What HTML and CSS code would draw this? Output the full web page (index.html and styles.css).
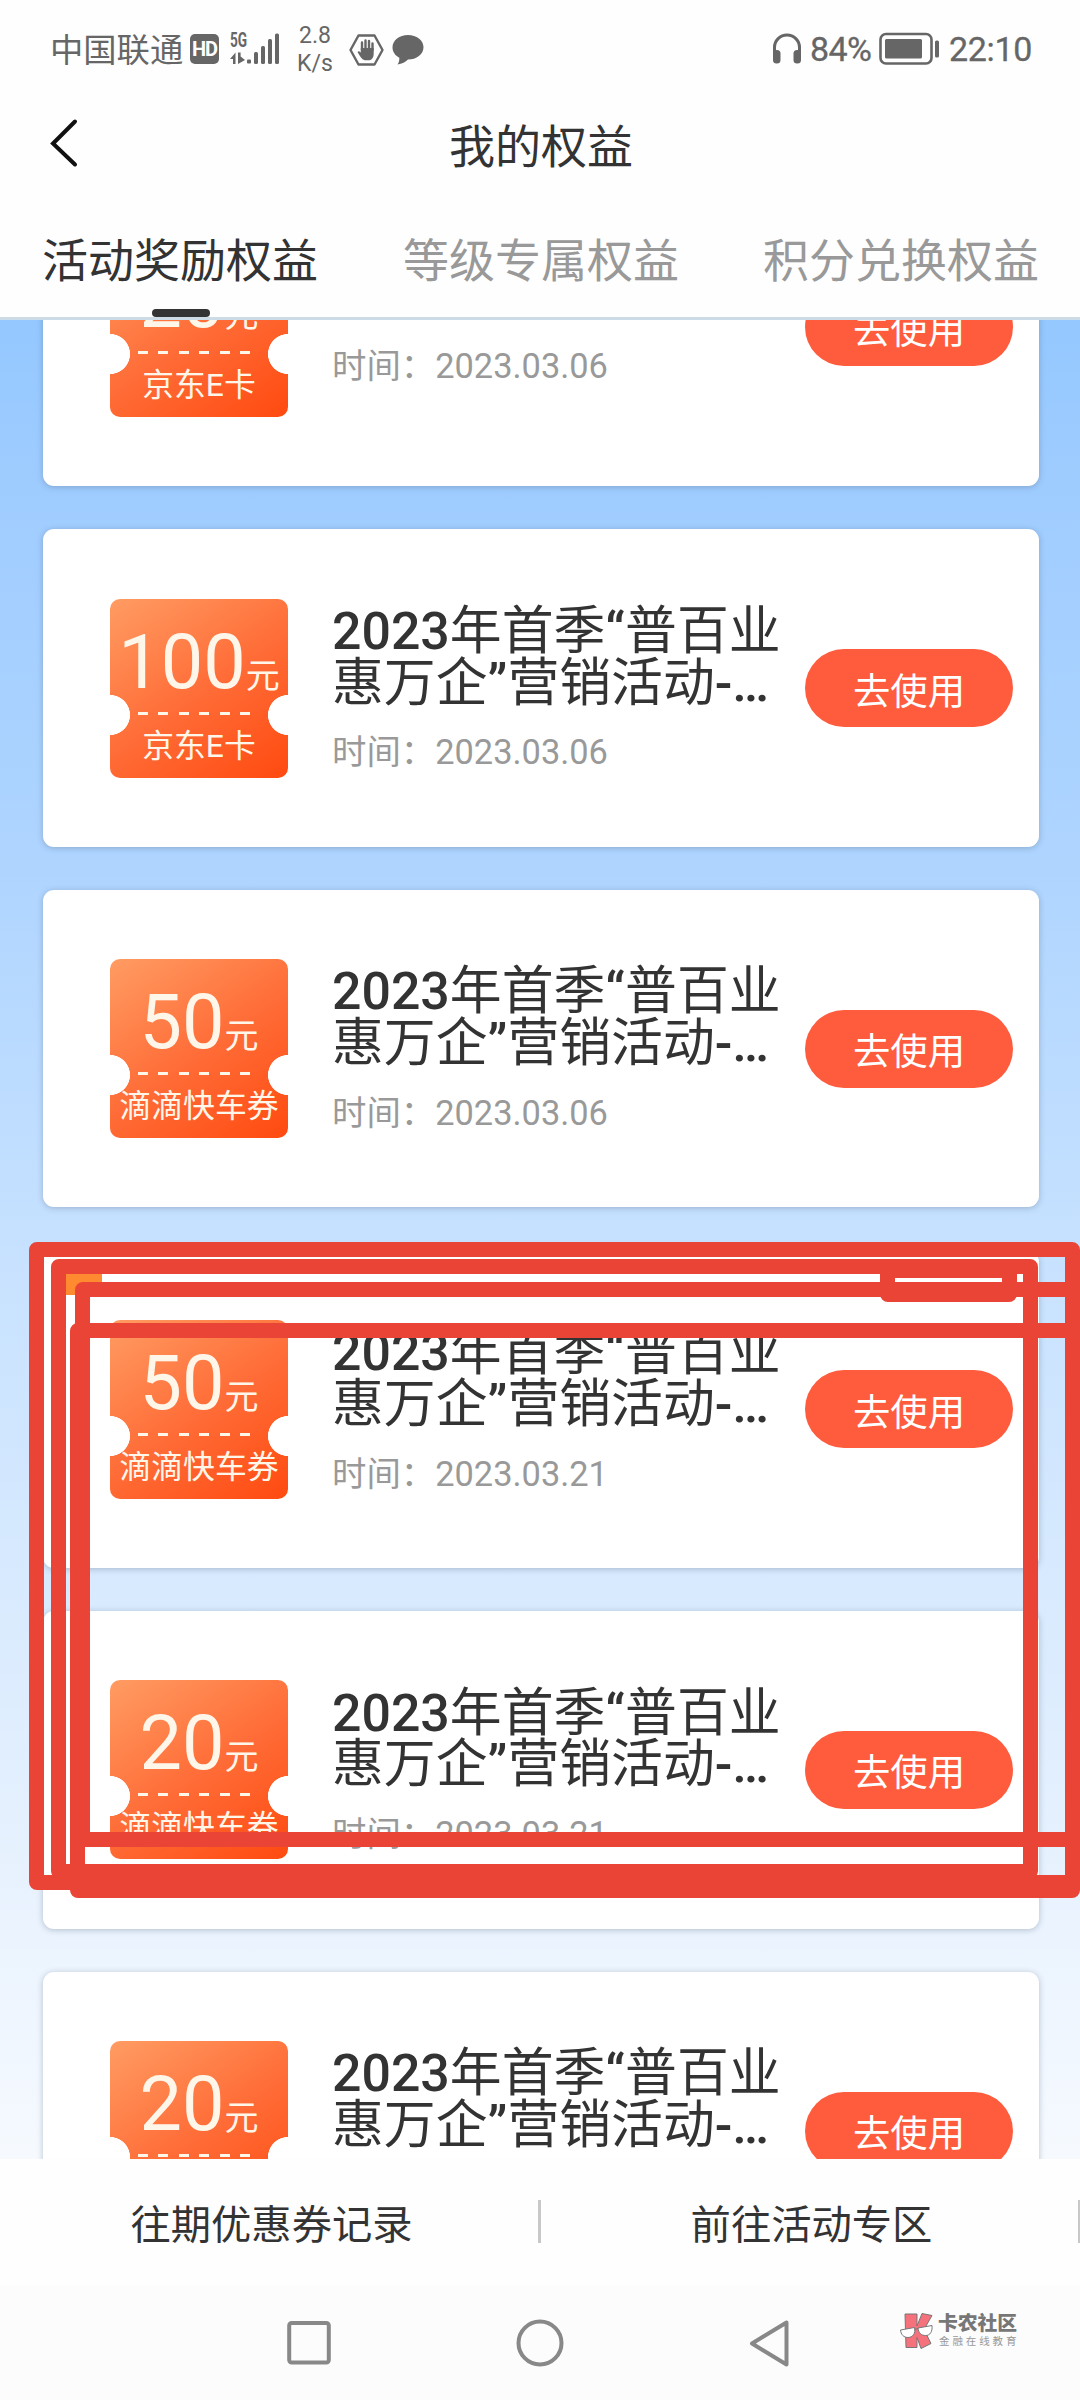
FILE: index.html
```html
<!DOCTYPE html>
<html lang="zh-CN">
<head>
<meta charset="utf-8">
<title>我的权益</title>
<link rel="stylesheet" href="styles.css">
</head>
<body>
<div class="screen">
  <header class="header">
    <div class="status">
      <div class="status-left">
        <span class="carrier">中国联通</span>
        <span class="hd">HD</span>
        <div class="net">
          <span class="net-type">5G</span>
          <svg class="signal" width="50" height="32" viewBox="0 0 50 32" fill="#666">
            <path d="M0 26l5.500-6.500V31H3v-5zM8 19.500h2.600v4l4.400 3.500-7 4z"/>
            <rect x="17" y="26.500" width="4" height="4" rx="1"/><rect x="24" y="19" width="4" height="12" rx="1.500"/><rect x="31" y="13" width="4" height="18" rx="1.500"/><rect x="38" y="6" width="4" height="25" rx="1.500"/><rect x="45" y="0.500" width="4" height="30.500" rx="1.500"/>
          </svg>
        </div>
        <div class="speed"><span>2.8</span><span>K/s</span></div>
        <svg class="guard" width="35" height="32" viewBox="0 0 35 32">
          <path d="M9.500 1.500h16l8 14.500-8 14.500h-16L1.500 16z" fill="none" stroke="#666" stroke-width="2.400" stroke-linejoin="round"/>
          <path d="M13 16V8.500M16.500 15V6.500M20 15V7M23.500 16V9.500" stroke="#666" stroke-width="2.400" stroke-linecap="round"/>
          <path d="M11.800 14h12.900v6c0 3-1.500 5.500-4 6.300h-5c-3-1-5-4.300-7.200-8.300 1.300-1.600 2.700-.4 3.300.8z" fill="#666"/>
        </svg>
        <svg class="chat" width="32" height="32" viewBox="0 0 32 32"><path d="M16 1C7.500 1 .500 6.200.500 13.300c0 4.500 2.600 8.300 6.800 10.500.2 2.500-.3 4.700-1.800 6.700 4.500-.6 8-2.400 10.500-4.900C24.500 25.600 31.500 20.500 31.500 13.300S24.500 1 16 1z" fill="#666"/></svg>
      </div>
      <div class="status-right">
        <svg width="30" height="32" viewBox="0 0 30 32"><path d="M2.500 24V14.500a12.500 12.500 0 0 1 25 0V24" fill="none" stroke="#666" stroke-width="3"/><rect x="1" y="17" width="7.500" height="13.500" rx="3.500" fill="#666"/><rect x="21.500" y="17" width="7.500" height="13.500" rx="3.500" fill="#666"/></svg>
        <span class="percent">84%</span>
        <svg class="battery" width="62" height="34" viewBox="0 0 62 34"><rect x="1.500" y="2" width="51" height="29.500" rx="5.500" fill="none" stroke="#666" stroke-width="2.600"/><rect x="6" y="7" width="37" height="19.500" rx="1.500" fill="#666"/><rect x="56" y="8.500" width="4" height="17" rx="1.500" fill="#666"/></svg>
        <span class="clock">22:10</span>
      </div>
    </div>
    <div class="titlebar">
      <svg class="back" width="30" height="50" viewBox="0 0 30 50"><path d="M26 3.500L4 25.500l22 21" fill="none" stroke="#111" stroke-width="4" stroke-linecap="round" stroke-linejoin="miter"/></svg>
      <h1>我的权益</h1>
    </div>
    <nav class="tabs">
      <span class="tab active">活动奖励权益</span>
      <span class="tab">等级专属权益</span>
      <span class="tab">积分兑换权益</span>
    </nav>
  </header>

  <main class="list">
    <article class="card">
      <div class="ticket"><div class="amount">20<small>元</small></div><div class="dash"></div><div class="kind">京东E卡</div></div>
      <div class="info"><h2>京东E卡</h2><p>时间：2023.03.06</p></div>
      <button class="use">去使用</button>
    </article>
    <article class="card">
      <div class="ticket"><div class="amount">100<small>元</small></div><div class="dash"></div><div class="kind">京东E卡</div></div>
      <div class="info"><h2><b>2023</b>年首季<b>“</b>普百业<br>惠万企<b>”</b>营销活动<b>-…</b></h2><p>时间：2023.03.06</p></div>
      <button class="use">去使用</button>
    </article>
    <article class="card">
      <div class="ticket"><div class="amount">50<small>元</small></div><div class="dash"></div><div class="kind">滴滴快车券</div></div>
      <div class="info"><h2><b>2023</b>年首季<b>“</b>普百业<br>惠万企<b>”</b>营销活动<b>-…</b></h2><p>时间：2023.03.06</p></div>
      <button class="use">去使用</button>
    </article>
    <article class="card">
      <i class="corner-tag"></i>
      <div class="ticket"><div class="amount">50<small>元</small></div><div class="dash"></div><div class="kind">滴滴快车券</div></div>
      <div class="info"><h2><b>2023</b>年首季<b>“</b>普百业<br>惠万企<b>”</b>营销活动<b>-…</b></h2><p>时间：2023.03.21</p></div>
      <button class="use">去使用</button>
    </article>
    <article class="card">
      <div class="ticket"><div class="amount">20<small>元</small></div><div class="dash"></div><div class="kind">滴滴快车券</div></div>
      <div class="info"><h2><b>2023</b>年首季<b>“</b>普百业<br>惠万企<b>”</b>营销活动<b>-…</b></h2><p>时间：2023.03.21</p></div>
      <button class="use">去使用</button>
    </article>
    <article class="card">
      <div class="ticket"><div class="amount">20<small>元</small></div><div class="dash"></div><div class="kind">滴滴快车券</div></div>
      <div class="info"><h2><b>2023</b>年首季<b>“</b>普百业<br>惠万企<b>”</b>营销活动<b>-…</b></h2><p>时间：2023.03.21</p></div>
      <button class="use">去使用</button>
    </article>
  </main>

  <footer class="links">
    <span class="link">往期优惠券记录</span>
    <span class="link">前往活动专区</span>
  </footer>

  <div class="navbar">
    <svg width="44" height="48" viewBox="0 0 44 48"><rect x="2.200" y="4" width="39.600" height="39.600" rx="2.500" fill="none" stroke="#888" stroke-width="4"/></svg>
    <svg width="48" height="48" viewBox="0 0 48 48"><circle cx="24" cy="24" r="21.500" fill="none" stroke="#888" stroke-width="4"/></svg>
    <svg width="44" height="50" viewBox="0 0 44 50"><path d="M37.500 3.500v42L3 24.500z" fill="none" stroke="#888" stroke-width="4" stroke-linejoin="round"/></svg>
  </div>

  <div class="brand">
    <svg width="36" height="38" viewBox="0 0 36 38" stroke="#777" stroke-width="1" stroke-linejoin="round">
      <path d="M6 2h12v12l5-12.500 10 2-8 14 7 14-10 5-4-11v10H7z" fill="#f5717c"/>
      <path d="M1.500 18l14-2.500c1.500 6-2 10-6.500 10S2 22.500 1.500 18z" fill="#fff"/>
      <path d="M19 16l14-2.500c.6 6-1.800 10-6.300 10S19.500 21 19 16zM15.500 17.500l3.500-1" fill="#fff"/>
    </svg>
    <div class="brand-text"><strong>卡农社区</strong><span>金融在线教育</span></div>
  </div>

  <div class="marks">
    <i class="mark m1"></i><i class="mark m2"></i><i class="mark m3"></i><i class="mark m4"></i><i class="mark m5"></i>
  </div>
</div>
</body>
</html>
```
FILE: styles.css
```css
* { box-sizing: border-box; }
body { margin: 0; background: #fff; font-family: Roboto, "Noto Sans CJK SC", sans-serif; color: #333; }
h1, h2, p { margin: 0; font-weight: 400; }
svg { display: block; flex: none; }

.screen { position: relative; width: 1080px; height: 2400px; overflow: hidden; display: flex; flex-direction: column; }

.header { position: relative; z-index: 1; flex: none; height: 320px; background: #fefefe; border-bottom: 3px solid #cddbe6; display: flex; flex-direction: column; }
.status { height: 98px; padding: 0 47px 0 50px; display: flex; justify-content: space-between; align-items: center; color: #666; }
.status-left, .status-right { display: flex; align-items: center; }
.carrier { font-size: 33.300px; line-height: 40px; width: 134px; white-space: nowrap; margin-top: 3px; }
.hd { margin-left: 6px; width: 29px; height: 30px; border-radius: 5px; background: #666; color: #fff; font-size: 20px; font-weight: 700; line-height: 31px; text-align: center; letter-spacing: -1px; }
.net { position: relative; margin-left: 11px; height: 32px; }
.net-type { position: absolute; left: 0; top: -1px; font-size: 19.500px; font-weight: 700; line-height: 18px; transform: scaleX(.7); transform-origin: left; }
.speed { margin: 1px 0 0 16px; width: 38px; display: flex; flex-direction: column; font-size: 23px; line-height: 27.500px; text-align: center; }
.guard { margin-left: 15px; margin-top: 1px; }
.chat { margin-left: 8px; margin-top: 1px; }
.percent { margin-left: 8px; font-size: 34px; width: 63px; white-space: nowrap; letter-spacing: -.6px; margin-top: 0; -webkit-text-stroke: .3px #666; }
.battery { margin-left: 6px; margin-right: 1px; }
.clock { margin-left: 7px; font-size: 34px; width: 84px; white-space: nowrap; letter-spacing: -.3px; margin-top: 0; -webkit-text-stroke: .3px #666; }

.titlebar { height: 96px; display: grid; grid-template-columns: 100px 1fr 100px; align-items: center; }
.back { margin: -7px 0 0 49px; }
h1 { font-size: 46px; line-height: 60px; text-align: center; padding: 2px 0 0 2px; }
.tabs { height: 123px; display: grid; grid-template-columns: repeat(3, 1fr); }
.tab { position: relative; text-align: center; font-size: 46px; line-height: 60px; padding: 37px 0 0 2px; color: #999; }
.tab.active { color: #333; padding-left: 0; }
.tab.active::after { content: ""; position: absolute; left: 152px; top: 115px; width: 58px; height: 8px; border-radius: 4px; background: #333; }

.list { flex: none; height: 1838.500px; overflow: hidden; padding: 0 41px 0 43px; display: flex; flex-direction: column; gap: 43.330px;
  background: linear-gradient(#94c8ff 0, #9fccff 9%, #afd5ff 30%, #c6e1ff 50%, #d8eafe 69%, #eaf3fe 87%, #f6faff 100%); }
.card { position: relative; flex: none; height: 317.330px; background: #fff; border-radius: 11px; box-shadow: 0 1px 6px rgba(60, 80, 100, .32); padding: 0 26px 0 67px; display: flex; align-items: center; }
.card:first-child { margin-top: -151.300px; }
.corner-tag { position: absolute; left: 17px; top: 15px; width: 42px; height: 29px; background: #ff8a30; }
.ticket { flex: none; width: 178px; height: 179px; border-radius: 10px; color: #fff6ea; display: flex; flex-direction: column; align-items: center;
  background: radial-gradient(circle at 0 116px, #fff 19.700px, transparent 20.300px), radial-gradient(circle at 100% 116px, #fff 19.700px, transparent 20.300px), linear-gradient(145deg, #ff9c63 0%, #ff6c37 52%, #ff4a10 100%); }
.amount { height: 113px; padding-top: 21px; font-size: 75.600px; line-height: 84px; white-space: nowrap; }
.amount small { font-size: 34px; }
.dash { flex: none; align-self: flex-start; margin-left: 28px; width: 112px; height: 3px; background: repeating-linear-gradient(90deg, #fff6ea 0 10px, transparent 10px 20.400px); }
.kind { font-size: 31.800px; line-height: 40px; margin-top: 11px; white-space: nowrap; }
.info { flex: 1; margin-left: 44px; padding-top: 3px; white-space: nowrap; }
h2 { font-size: 51.840px; line-height: 51.840px; }
h2 b { font-weight: 500; }
.info p { margin-top: 22px; font-size: 34.400px; line-height: 42px; color: #999; }
.use { flex: none; width: 208px; height: 78px; border: 0; border-radius: 39px; padding: 7px 0 0; background: #ff5b3d; color: #fff; font: inherit; font-size: 37.400px; line-height: 40px; }

.links { flex: none; height: 126.500px; background: #fefefe; display: grid; grid-template-columns: 1fr 1fr; align-items: center; }
.link { height: 43px; line-height: 51px; font-size: 40.300px; text-align: center; border-right: 3px solid #c8c8c8; padding-left: 5px; margin-right: -1px; }
.link:last-child { border-right-width: 2px; margin-right: 0; }

.navbar { flex: 1; background: #fcfcfc; display: flex; align-items: flex-start; gap: 184px; padding: 34px 0 0 287px; }
.navbar svg + svg { margin-left: 1px; }

.brand { position: absolute; left: 899px; top: 2312px; display: flex; gap: 3px; }
.brand-text { display: flex; flex-direction: column; white-space: nowrap; color: #777; }
.brand strong { font-size: 19.800px; line-height: 22px; font-weight: 900; margin-top: 1px; }
.brand span { font-size: 10.500px; line-height: 14px; letter-spacing: 2.900px; margin-left: 1px; color: #999; }

.marks { position: absolute; left: 0; top: 0; z-index: 2; }
.mark { position: absolute; border: 15px solid #e94436; border-radius: 8px; }
.m1 { left: 29px; top: 1242px; width: 1051px; height: 648px; }
.m2 { left: 51px; top: 1259px; width: 987px; height: 620px; }
.m3 { left: 75px; top: 1282px; width: 1005px; height: 565px; }
.m4 { left: 69.500px; top: 1323px; width: 1010.500px; height: 575px; }
.m5 { left: 880px; top: 1263px; width: 137px; height: 38.500px; border-bottom-width: 17px; }
```
